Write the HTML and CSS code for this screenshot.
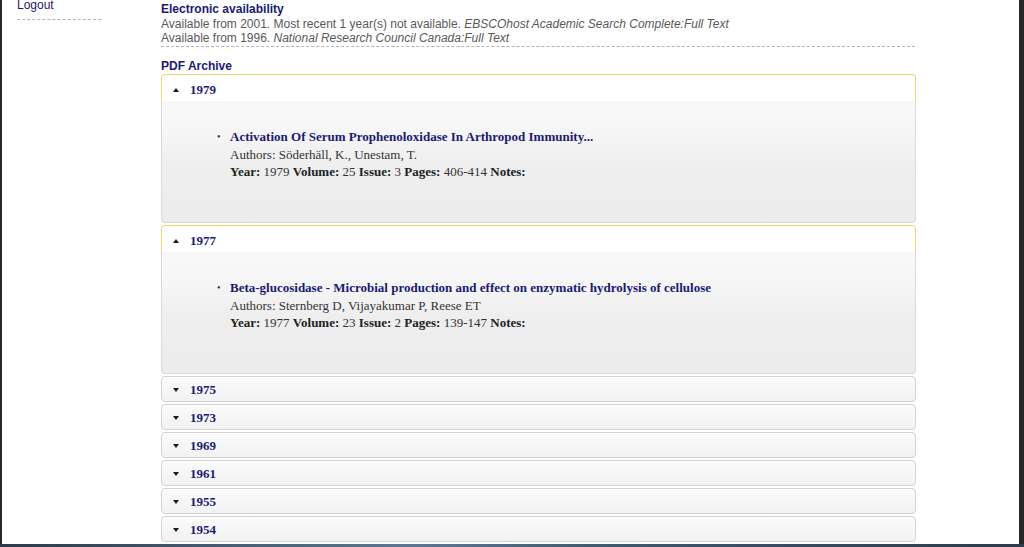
FILE: index.html
```html
<!DOCTYPE html>
<html>
<head>
<meta charset="utf-8">
<link rel="stylesheet" href="styles.css">
</head>
<body>
<div class="screen">
  <div class="window">
    <aside class="sidebar">
      <ul class="nav">
        <li><a href="#">Logout</a></li>
      </ul>
    </aside>
    <main class="main">
      <section class="avail">
        <h3 class="label">Electronic availability</h3>
        <div class="avail-line">Available from 2001. Most recent 1 year(s) not available. <em>EBSCOhost Academic Search Complete:Full Text</em></div>
        <div class="avail-line">Available from 1996. <em>National Research Council Canada:Full Text</em></div>
      </section>
      <h3 class="label pdf-label">PDF Archive</h3>
      <div class="accordion">
        <div class="panel open">
          <div class="header"><span class="tri up"></span><span class="year">1979</span></div>
          <div class="content">
            <ul class="items">
              <li>
                <a href="#" class="title">Activation Of Serum Prophenoloxidase In Arthropod Immunity...</a><br>
                Authors: Söderhäll, K., Unestam, T.<br>
                <b>Year:</b> 1979 <b>Volume:</b> 25 <b>Issue:</b> 3 <b>Pages:</b> 406-414 <b>Notes:</b>
              </li>
            </ul>
          </div>
        </div>
        <div class="panel open">
          <div class="header"><span class="tri up"></span><span class="year">1977</span></div>
          <div class="content">
            <ul class="items">
              <li>
                <a href="#" class="title">Beta-glucosidase - Microbial production and effect on enzymatic hydrolysis of cellulose</a><br>
                Authors: Sternberg D, Vijayakumar P, Reese ET<br>
                <b>Year:</b> 1977 <b>Volume:</b> 23 <b>Issue:</b> 2 <b>Pages:</b> 139-147 <b>Notes:</b>
              </li>
            </ul>
          </div>
        </div>
        <div class="panel"><div class="header"><span class="tri down"></span><span class="year">1975</span></div></div>
        <div class="panel"><div class="header"><span class="tri down"></span><span class="year">1973</span></div></div>
        <div class="panel"><div class="header"><span class="tri down"></span><span class="year">1969</span></div></div>
        <div class="panel"><div class="header"><span class="tri down"></span><span class="year">1961</span></div></div>
        <div class="panel"><div class="header"><span class="tri down"></span><span class="year">1955</span></div></div>
        <div class="panel"><div class="header"><span class="tri down"></span><span class="year">1954</span></div></div>
      </div>
    </main>
  </div>
  <div class="taskbar"></div>
</div>
</body>
</html>
```
FILE: styles.css
```css
html, body {
  margin: 0;
  padding: 0;
  height: 100%;
  overflow: hidden;
}
body {
  font-family: "Liberation Sans", Arial, sans-serif;
  font-size: 12px;
  background: #fff;
}
.screen {
  display: flex;
  flex-direction: column;
  height: 547px;
}
.window {
  flex: 1;
  display: flex;
  min-height: 0;
  overflow: hidden;
  background: #fff;
  border-left: 2px solid #2a2727;
  border-right: 5px solid #2a2727;
}
.taskbar {
  height: 3px;
  background: linear-gradient(90deg, #2c3a4a 0%, #5b7892 40%, #3f5770 60%, #2d3b4b 100%);
}
.sidebar {
  width: 159px;
  flex: none;
  padding-left: 15px;
  box-sizing: border-box;
}
.nav {
  list-style: none;
  margin: -2px 0 0 0;
  padding: 0;
  width: 84px;
}
.nav li {
  line-height: 14px;
  padding-bottom: 7px;
  border-bottom: 1px dashed #b5b5b5;
}
.nav a {
  color: #1a1a73;
  text-decoration: none;
}
.main {
  width: 755px;
  flex: none;
  padding-top: 2px;
}
.label {
  margin: 0;
  font-size: 12px;
  font-weight: bold;
  color: #1a1a73;
  line-height: 15px;
}
.avail {
  border-bottom: 1px dashed #b5b5b5;
  padding-bottom: 1px;
  width: 754px;
}
.avail-line {
  color: #595959;
  line-height: 14px;
}
.avail-line em {
  font-style: italic;
}
.pdf-label {
  margin-top: 12px;
}
.panel {
  margin-top: 2px;
}
.panel:first-child {
  margin-top: 0;
}
.header {
  display: flex;
  align-items: center;
  height: 24px;
  box-sizing: content-box;
  padding: 2px 0 0 11px;
  height: 22px;
  border: 1px solid #d3d3d3;
  border-radius: 4px;
  background: linear-gradient(#fbfbfb, #f2f2f2);
  font-family: "Liberation Serif", "Times New Roman", serif;
  font-size: 13px;
  font-weight: bold;
  color: #1a1a73;
}
.panel.open .header {
  padding-top: 3px;
  height: 23px;
  border-color: #f0d96b;
  border-bottom: none;
  border-radius: 4px 4px 0 0;
  background: #fff;
}
.tri {
  width: 0;
  height: 0;
  border-left: 3.5px solid transparent;
  border-right: 3.5px solid transparent;
  margin-right: 11px;
}
.tri.up {
  border-bottom: 4px solid #1b1b1b;
}
.tri.down {
  border-top: 4px solid #1b1b1b;
}
.content {
  height: 121px;
  border: 1px solid #d9d9d9;
  border-top: none;
  border-radius: 0 0 4px 4px;
  background: linear-gradient(#f8f8f8 0%, #f7f7f7 20%, #eeeeee 55%, #ececec 100%);
  font-family: "Liberation Serif", "Times New Roman", serif;
  font-size: 13px;
  color: #333;
}
.items {
  margin: 0;
  padding: 27px 0 0 68px;
  line-height: 17.5px;
  list-style: none;
}
.items li {
  position: relative;
}
.items li::before {
  content: "•";
  position: absolute;
  left: -13px;
  top: 0;
  color: #333;
  font-size: 10px;
}
.items b {
  color: #222;
}
.title {
  color: #1a1a73;
  font-weight: bold;
  text-decoration: none;
}
```
